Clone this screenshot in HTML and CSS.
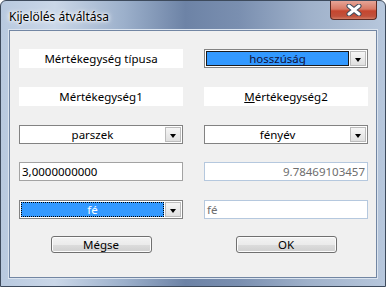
FILE: index.html
```html
<!DOCTYPE html>
<html lang="hu">
<head>
    <meta charset="UTF-8">
    <title>Kijelölés átváltása</title>
    <link rel="stylesheet" href="styles.css">
</head>
<body>
    <div class="window">
        <div class="titlebar">
            <span class="title">Kijelölés átváltása</span>
            <div class="close">
                <svg width="16" height="12" viewBox="0 0 16 12">
                    <path d="M3 2 L13 10 M13 2 L3 10" stroke="#3b4a5c" stroke-width="5" stroke-linecap="round"/>
                    <path d="M3 2 L13 10 M13 2 L3 10" stroke="#ffffff" stroke-width="3" stroke-linecap="round"/>
                </svg>
            </div>
        </div>
        <div class="client">
            <div class="grid">
                <div class="label">Mértékegység típusa</div>
                <div class="combo">
                    <span class="value selected">hosszúság</span>
                    <span class="arrow"></span>
                </div>

                <div class="label">Mértékegység1</div>
                <div class="label"><u>M</u>értékegység2</div>

                <div class="combo">
                    <span class="value">parszek</span>
                    <span class="arrow"></span>
                </div>
                <div class="combo">
                    <span class="value">fényév</span>
                    <span class="arrow"></span>
                </div>

                <div class="field">3,0000000000</div>
                <div class="field readonly right">9.78469103457</div>

                <div class="combo">
                    <span class="value focused">fé</span>
                    <span class="arrow"></span>
                </div>
                <div class="field readonly">fé</div>
            </div>
            <div class="buttons">
                <div class="btn">Mégse</div>
                <div class="btn">OK</div>
            </div>
        </div>
    </div>
</body>
</html>
```

FILE: styles.css
```css
body {
    margin: 0;
    background-color: #ffffff;
    font-family: "Noto Sans", "DejaVu Sans", sans-serif;
    font-size: 11.5px;
}
.window {
    width: 386px;
    height: 287px;
    box-sizing: border-box;
    padding: 0 8px 8px 8px;
    border: 1px solid #3d4a5c;
    border-radius: 6px 6px 0 0;
    background: linear-gradient(to right, #b8c9df 0%, #cad7e8 14%, #9cb0cb 32%, #6d83a6 48%, #7a8fb0 62%, #9fb1ca 80%, #b7c7dc 100%);
    display: flex;
    flex-direction: column;
}
.titlebar {
    height: 29px;
    display: flex;
    justify-content: space-between;
}
.title {
    align-self: center;
    color: #000000;
    font-size: 12px;
    padding-top: 1px;
    text-shadow: 0 0 6px #ffffff, 0 0 4px #ffffff, 0 0 2px #ffffff;
}
.close {
    width: 45px;
    height: 18px;
    border: 1px solid #5b2b24;
    border-top: none;
    border-radius: 0 0 4px 4px;
    background: linear-gradient(#e6a597 0%, #d87965 45%, #c5462f 55%, #c0513c 85%, #d37a62 100%);
    display: flex;
    align-items: center;
    justify-content: center;
}
.client {
    flex: 1;
    background-color: #f0f0f0;
    border: 1px solid #7286a3;
    box-shadow: 0 0 0 1px #dbe4ef;
}
.grid {
    display: grid;
    grid-template-columns: 164px 164px;
    grid-template-rows: repeat(5, 19px);
    column-gap: 21px;
    row-gap: 18.75px;
    padding: 18px 10px 0 9px;
}
.label {
    background-color: #ffffff;
    color: #000000;
    text-align: center;
    line-height: 19px;
}
.label u {
    text-decoration-thickness: 1px;
}
.combo {
    display: flex;
    box-sizing: border-box;
    border: 1px solid #828282;
    background-color: #ffffff;
    padding: 1px;
}
.combo .value {
    flex: 1;
    text-align: center;
    line-height: 15px;
    color: #000000;
    box-sizing: border-box;
}
.combo .value.selected {
    background-color: #3399ff;
    border: 1px solid #1b1b1b;
    line-height: 13px;
    color: #10103a;
}
.combo .value.focused {
    background-color: #3399ff;
    border: 1px dotted #000000;
    line-height: 13px;
    color: #ffffff;
}
.combo .arrow {
    width: 16px;
    margin-left: 1px;
    box-sizing: border-box;
    border: 1px solid #bcbcbc;
    background: linear-gradient(#f6f6f6, #e0e0e0);
    display: flex;
    align-items: center;
    justify-content: center;
}
.combo .arrow::after {
    content: "";
    border-top: 4px solid #000000;
    border-left: 3.5px solid transparent;
    border-right: 3.5px solid transparent;
    margin-top: 3px;
}
.field {
    box-sizing: border-box;
    border: 1px solid #a3a3a3;
    background-color: #ffffff;
    color: #000000;
    padding: 0 2px;
    line-height: 17px;
}
.field.readonly {
    border-color: #b5c8de;
    color: #6d6d6d;
}
.field.right {
    text-align: right;
}
.buttons {
    display: grid;
    grid-template-columns: 164px 164px;
    column-gap: 21px;
    padding: 17px 10px 0 9px;
}
.btn {
    justify-self: center;
    width: 101px;
    height: 17px;
    box-sizing: border-box;
    border: 1px solid #707070;
    border-radius: 3px;
    background: linear-gradient(#f3f3f3 0%, #ebebeb 50%, #dddddd 51%, #cfcfcf 100%);
    box-shadow: inset 0 0 0 1px #fcfcfc;
    text-align: center;
    line-height: 15px;
    color: #000000;
}
```
